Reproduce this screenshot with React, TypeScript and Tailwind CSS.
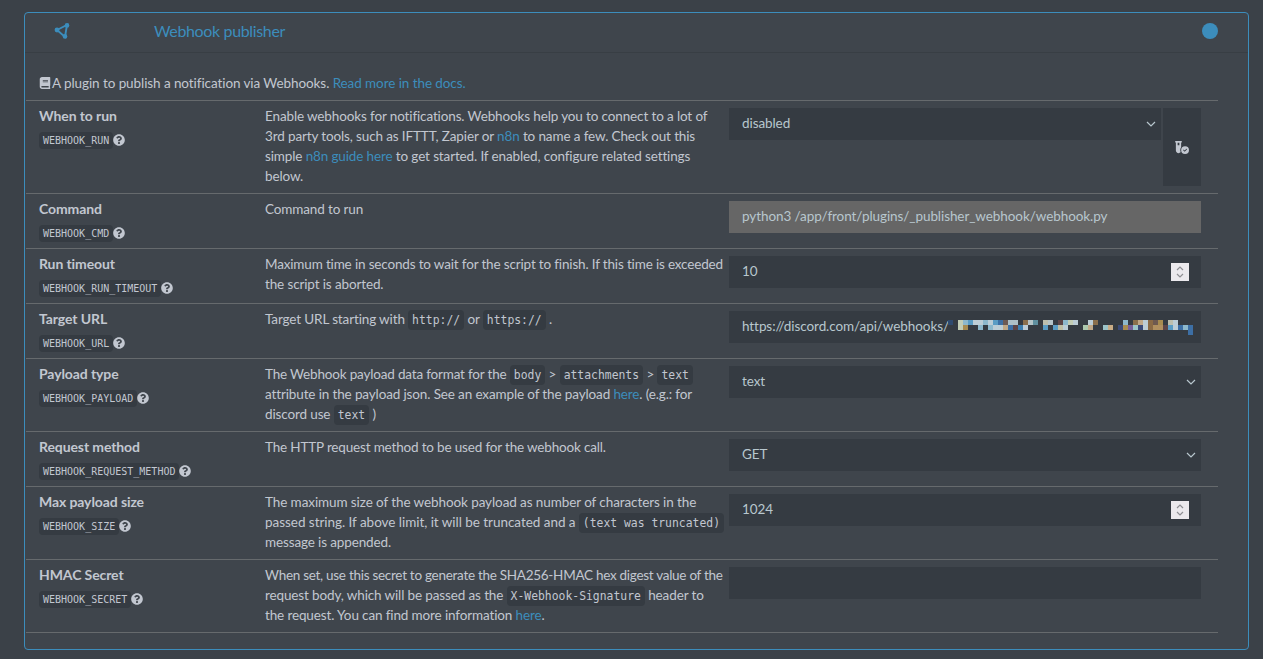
import React from 'react';
import { FaBook, FaQuestionCircle } from 'react-icons/fa';
import { FaVialCircleCheck } from 'react-icons/fa6';

// mosaic blocks of the blurred webhook token: [col, row, colour]
const mosaic: [number, number, string][] = [
  [-2, 0, '#2f4a6e'],
  [0, 0, '#c3cdb5'], [1, 0, '#8db8cc'], [2, 0, '#5a9cc4'], [3, 0, '#bccdd6'], [4, 0, '#bccdd6'], [5, 0, '#8db8cc'], [6, 0, '#bccdd6'], [7, 0, '#5a9cc4'], [8, 0, '#3d6fa5'], [9, 0, '#6c5a55'], [10, 0, '#adc0c8'], [11, 0, '#adc0c8'], [13, 0, '#8a6f4c'], [14, 0, '#b5c4c8'], [15, 0, '#5f8f9f'],
  [17, 0, '#bdbfae'], [18, 0, '#b5c4c8'], [20, 0, '#5c4548'], [21, 0, '#8db8cc'], [22, 0, '#c3cdb5'], [23, 0, '#bccdd6'], [26, 0, '#bccdd6'], [27, 0, '#8a6f4c'],
  [33, 0, '#8db8cc'], [35, 0, '#8a6f4c'], [36, 0, '#c0a888'], [37, 0, '#bccdd6'], [38, 0, '#8a6a45'], [39, 0, '#6e5a50'], [40, 0, '#a88c50'], [42, 0, '#bdbfae'], [43, 0, '#bccdd6'],
  [0, 1, '#c3cdb5'], [1, 1, '#a88c50'], [4, 1, '#8db8cc'], [6, 1, '#8db8cc'], [7, 1, '#bccdd6'], [8, 1, '#bccdd6'], [9, 1, '#c0a888'], [10, 1, '#3d6fa5'], [11, 1, '#5c4548'], [12, 1, '#3d7fb0'], [13, 1, '#bccdd6'],
  [17, 1, '#5a9cc4'], [19, 1, '#5a9cc4'], [20, 1, '#c0bfa5'], [21, 1, '#bccdd6'], [25, 1, '#adc9ae'], [26, 1, '#c0a888'],
  [29, 1, '#9cc4c8'], [30, 1, '#c9ac86'], [32, 1, '#3a4a78'], [33, 1, '#a88c50'], [34, 1, '#75609a'], [35, 1, '#9cc4c8'], [36, 1, '#3a4a78'], [37, 1, '#bccdd6'], [38, 1, '#8a6a45'], [39, 1, '#b09060'], [40, 1, '#b09060'], [41, 1, '#5c4548'],
  [42, 1, '#5a9cc4'], [43, 1, '#bccdd6'], [44, 1, '#3d6fa5'], [45, 1, '#8db8cc'], [46, 1, '#3d6fa5'], [46, 2, '#3d6fa5'],
];

const Code: React.FC<{ children: React.ReactNode }> = ({ children }) => (
  <code className="rounded-[4px] bg-[#353b42] px-[4px] py-[3px] font-['DejaVu_Sans_Mono',monospace] text-[11.4px] leading-none tracking-normal text-[#c2c7d0]">
    {children}
  </code>
);

const A: React.FC<{ children: React.ReactNode }> = ({ children }) => (
  <a href="#" className="text-[#3c8dbc]">{children}</a>
);

const Chevron = () => (
  <svg viewBox="0 0 10 6" className="pointer-events-none absolute right-[5px] top-[13px] h-[6px] w-[10px]" fill="none" stroke="#b8c7ce" strokeWidth="1.2">
    <path d="M1 1l4 4 4-4" />
  </svg>
);

const Spin = () => (
  <div className="pointer-events-none absolute right-[12px] top-[7px] flex h-[18px] w-[18px] items-center justify-center bg-[#ebe9ed]">
    <svg viewBox="0 0 10 14" className="h-[14px] w-[10px]" fill="none" stroke="#8e8e93" strokeWidth="1.2">
      <path d="M2 5l3-3 3 3M2 9l3 3 3-3" />
    </svg>
  </div>
);

const inputClass = 'block h-[32px] w-full appearance-none bg-[#353b42] px-[13px] pb-[2px] tracking-[-0.08px] text-[#b8c7ce] outline-none';

const SelectBox: React.FC<{ value: string }> = ({ value }) => (
  <div className="relative w-full">
    <select defaultValue={value} className={inputClass}>
      <option>{value}</option>
    </select>
    <Chevron />
  </div>
);

const NumberBox: React.FC<{ value: string }> = ({ value }) => (
  <div className="relative">
    <input readOnly value={value} className={inputClass} />
    <Spin />
  </div>
);

const Row: React.FC<{
  label: string;
  code: string;
  desc: React.ReactNode;
  children?: React.ReactNode;
}> = ({ label, code, desc, children }) => (
  <div className="grid grid-cols-[239px_464px_472px] border-b border-[#666a6d] pt-[5px]">
    <div className="pb-[5px] pl-[13px]">
      <div className="h-[20px] text-[14px] font-bold tracking-[-0.1px]">{label}</div>
      <div className="mt-[4px] flex h-[20px] items-center">
        <span className="rounded-[4px] bg-[#353b42] px-[4px] py-[1px] font-['DejaVu_Sans_Mono',monospace] text-[10px] leading-[15px] tracking-normal text-[#c2c7d0]">
          {code}
        </span>
        <FaQuestionCircle className="text-[12px] text-[#c2c7d0]" />
      </div>
    </div>
    <div className="whitespace-nowrap pb-[7px]">{desc}</div>
    <div className="pt-[2px]">{children}</div>
  </div>
);

export default function App() {
  return (
    <div className="h-[659px] overflow-hidden bg-[#3b4148] pl-[24px] pt-[12px] font-['Lato',sans-serif] text-[13.5px] leading-[20px] tracking-[-0.13px] text-[#c2c7d0]">
      <div className="h-[638px] w-[1225px] rounded-[4px] border border-[#3c8dbc] bg-[#3f454c]">
        <div className="flex h-[40px] items-center border-b border-[#383e44] pb-[4px]">
          <div className="w-[129px] pl-[29px]">
            <svg viewBox="0 0 16 16" className="h-[16px] w-[16px]" fill="none" stroke="#3c8dbc" strokeWidth="1.9">
              <path d="M3 7L13 2l-2 12z" />
              <circle cx="3" cy="7" r="2.4" fill="#3c8dbc" stroke="none" />
              <circle cx="13" cy="2.4" r="2.3" fill="#3c8dbc" stroke="none" />
              <circle cx="11" cy="13.4" r="2.3" fill="#3c8dbc" stroke="none" />
            </svg>
          </div>
          <h3 className="text-[16px] tracking-[-0.35px] text-[#3c8dbc]">Webhook publisher</h3>
          <span className="ml-auto mr-[30px] h-[16px] w-[16px] rounded-full bg-[#3c8dbc]" />
        </div>

        <div className="w-[1193px] pl-[1px] pt-[20px]">
          <div className="flex h-[28px] items-start border-b border-[#666a6d] pl-[13px]">
            <FaBook className="mr-[1px] mt-[4px] text-[12px]" />
            <span className="tracking-[-0.08px]">A plugin to publish a notification via Webhooks. <A>Read more in the docs.</A></span>
          </div>

          <Row
            label="When to run"
            code="WEBHOOK_RUN"
            desc={<>Enable webhooks for notifications. Webhooks help you to connect to a lot of<br />3rd party tools, such as IFTTT, Zapier or <A>n8n</A> to name a few. Check out this<br />simple <A>n8n guide here</A> to get started. If enabled, configure related settings<br />below.</>}
          >
            <div className="flex gap-[2px]">
              <SelectBox value="disabled" />
              <button className="flex h-[78px] w-[38px] shrink-0 items-center justify-center bg-[#353b42] text-[14px] text-[#c2c7d0]">
                <FaVialCircleCheck />
              </button>
            </div>
          </Row>

          <Row label="Command" code="WEBHOOK_CMD" desc="Command to run">
            <input readOnly value="python3 /app/front/plugins/_publisher_webhook/webhook.py" className="block h-[32px] w-full bg-[#666666] px-[13px] pb-[2px] tracking-[-0.08px] text-[#b8c7ce] outline-none" />
          </Row>

          <Row
            label="Run timeout"
            code="WEBHOOK_RUN_TIMEOUT"
            desc={<><span className="tracking-[-0.16px]">Maximum time in seconds to wait for the script to finish. If this time is exceeded</span><br />the script is aborted.</>}
          >
            <NumberBox value="10" />
          </Row>

          <Row
            label="Target URL"
            code="WEBHOOK_URL"
            desc={<>Target URL starting with <Code>http://</Code> or <Code>https://</Code> .</>}
          >
            <div className="relative">
              <input readOnly value="https://discord.com/api/webhooks/" className={inputClass} />
              <svg viewBox="0 0 245 20" className="absolute left-[219px] top-[9px] h-[20px] w-[245px]">
                {mosaic.map(([c, r, fill], i) => (
                  <rect key={i} x={(c + 2) * 5} y={r * 5} width="5" height="5" fill={fill} />
                ))}
              </svg>
            </div>
          </Row>

          <Row
            label="Payload type"
            code="WEBHOOK_PAYLOAD"
            desc={<><span className="tracking-[-0.18px]">The Webhook payload data format for the</span> <Code>body</Code> &gt; <Code>attachments</Code> &gt; <Code>text</Code><br />attribute in the payload json. See an example of the payload <A>here</A>. (e.g.: for<br />discord use <Code>text</Code> )</>}
          >
            <SelectBox value="text" />
          </Row>

          <Row
            label="Request method"
            code="WEBHOOK_REQUEST_METHOD"
            desc={<span className="tracking-[-0.17px]">The HTTP request method to be used for the webhook call.</span>}
          >
            <SelectBox value="GET" />
          </Row>

          <Row
            label="Max payload size"
            code="WEBHOOK_SIZE"
            desc={<><span className="tracking-[-0.09px]">The maximum size of the webhook payload as number of characters in the</span><br /><span className="tracking-[-0.04px]">passed string. If above limit, it will be truncated and a</span> <Code>(text was truncated)</Code><br />message is appended.</>}
          >
            <NumberBox value="1024" />
          </Row>

          <Row
            label="HMAC Secret"
            code="WEBHOOK_SECRET"
            desc={<><span className="tracking-[-0.28px]">When set, use this secret to generate the SHA256-HMAC hex digest value of the</span><br />request body, which will be passed as the <Code>X-Webhook-Signature</Code> header to<br />the request. You can find more information <A>here</A>.</>}
          >
            <input readOnly className={inputClass} />
          </Row>
        </div>
      </div>
    </div>
  );
}
